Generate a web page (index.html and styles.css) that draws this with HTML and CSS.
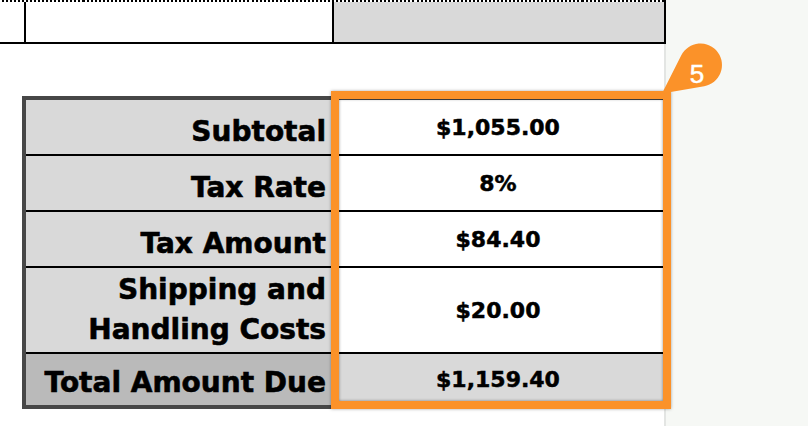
FILE: index.html
```html
<!DOCTYPE html>
<html>
<head>
<meta charset="utf-8">
<link rel="stylesheet" href="styles.css">
</head>
<body>
<div class="app">
  <div class="page">
    <div class="top-table">
      <div class="tc c1"></div>
      <div class="tc c2"></div>
      <div class="tc c3"></div>
    </div>
    <div class="summary-wrap">
      <div class="summary">
        <div class="label">Subtotal</div><div class="value">$1,055.00</div>
        <div class="label">Tax Rate</div><div class="value">8%</div>
        <div class="label">Tax Amount</div><div class="value">$84.40</div>
        <div class="label two-line">Shipping and<br>Handling Costs</div><div class="value">$20.00</div>
        <div class="label total">Total Amount Due</div><div class="value total">$1,159.40</div>
      </div>
      <div class="highlight"></div>
      <svg class="badge" viewBox="650 36 80 62" width="80" height="62">
        <path d="M662 93.5 L681.3 55.3 A21.5 21.5 0 1 1 704.2 86.2 Z" fill="#fb9229"/>
        <text x="697" y="83" text-anchor="middle" class="badge-num">5</text>
      </svg>
    </div>
  </div>
</div>
</body>
</html>
```

FILE: styles.css
```css
body {
  margin: 0;
  background: #f6f8f5;
}
.app {
  display: flex;
  height: 426px;
  overflow: hidden;
}
.page {
  width: 666px;
  height: 426px;
  box-sizing: border-box;
  background: #fff;
  border-right: 2px solid #e3e5e3;
}
.top-table {
  display: grid;
  grid-template-columns: 24px 308px 332px;
  width: 666px;
  height: 44px;
  box-sizing: border-box;
  border-top: 2px solid transparent;
  border-image: repeating-linear-gradient(90deg, #000 0 2px, transparent 2px 4px) 2;
  border-image-width: 2px 0 0 0;
  border-bottom: 2px solid #000;
  border-right: 2px solid #000;
  position: relative;
}
.top-table::after {
  content: "";
  position: absolute;
  left: 0;
  right: -2px;
  bottom: -2px;
  border-bottom: 2px solid #000;
}
.top-table::before {
  content: "";
  position: absolute;
  top: -2px;
  bottom: -2px;
  right: -2px;
  border-right: 2px solid #000;
}
.c2, .c3 {
  border-left: 2px solid #000;
}
.c3 {
  background: #d9d9d9;
}
.summary-wrap {
  position: relative;
  margin: 52px 0 0 22px;
  width: 645px;
}
.summary {
  display: grid;
  grid-template-columns: 305px 1fr;
  grid-template-rows: 56px 56px 56px 86px 51px;
  border: 4px solid #474747;
  font-family: "DejaVu Sans", sans-serif;
  font-weight: bold;
  color: #000;
}
.label, .value {
  box-sizing: border-box;
  border-bottom: 2px solid #000;
  display: flex;
  align-items: center;
}
.label {
  background: #d9d9d9;
  justify-content: flex-end;
  text-align: right;
  padding: 10px 5px 0 0;
  font-size: 28px;
  line-height: 40px;
  -webkit-text-stroke: 0.6px #000;
}
.label.two-line {
  padding-top: 0;
}
.value {
  background: #fff;
  border-left: 2px solid #000;
  justify-content: center;
  font-size: 22px;
  -webkit-text-stroke: 0.5px #000;
}
.label.total {
  background: #bababa;
  border-bottom: none;
  padding-top: 6px;
}
.value.total {
  background: #d9d9d9;
  border-bottom: none;
}
.highlight {
  position: absolute;
  left: 309px;
  top: -5px;
  width: 340px;
  height: 318px;
  box-sizing: border-box;
  border: 8px solid #fb9229;
  box-shadow: 0 0 3px rgba(0, 0, 0, 0.35), inset 0 0 3px rgba(0, 0, 0, 0.45);
}
.badge {
  position: absolute;
  left: 628px;
  top: -60px;
  overflow: visible;
}
.badge-num {
  font-family: "Liberation Sans", Arial, sans-serif;
  font-size: 26px;
  fill: #fff;
  stroke: #fff;
  stroke-width: 0.5px;
}
```
